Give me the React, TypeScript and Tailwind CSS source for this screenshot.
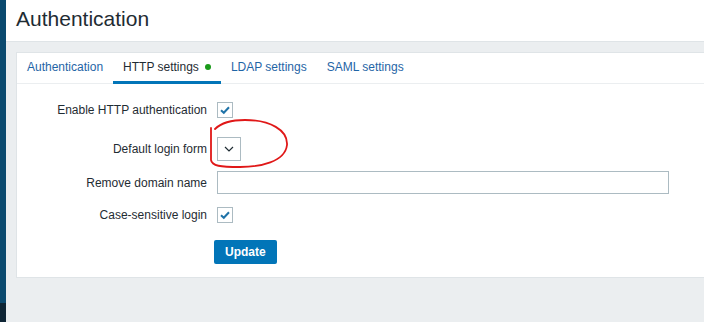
import React from 'react';

const Check: React.FC = () => (
  <div className="w-4 h-4 border border-[#acbbc2] bg-white flex items-center justify-center">
    <svg width="12" height="12" viewBox="0 0 12 12">
      <path d="M2 6.2 L4.8 8.8 L10 3.2" fill="none" stroke="#1f73a8" strokeWidth="2" />
    </svg>
  </div>
);

const Row: React.FC<{ label: string; children: React.ReactNode; className?: string }> = ({ label, children, className }) => (
  <div className={`flex items-center ${className ?? ''}`}>
    <div className="w-[200px] pr-[10px] text-right text-[12px] leading-[16px] text-[#1f2c33]">{label}</div>
    {children}
  </div>
);

export default function App() {
  return (
    <div className="relative w-[704px] h-[322px] flex bg-[#ebeef0] overflow-hidden" style={{ fontFamily: '"Liberation Sans", Arial, sans-serif' }}>
      {/* sidebar edge */}
      <div className="w-[6px] flex flex-col">
        <div className="flex-1 bg-[#0b4a6f]" />
        <div className="h-[19px] bg-[#0e2535]" />
      </div>

      <div className="flex-1 flex flex-col">
        <div className="h-[42px] bg-white border-b border-[#dfe4e7] pl-[10px] pt-[7px]">
          <h1 className="text-[21px] leading-[24px] text-[#1f2c33]">Authentication</h1>
        </div>

        <div className="pl-[10px] pt-[10px]">
          <div className="h-[226px] bg-white border border-[#dfe4e7] border-r-0">
            {/* tabs */}
            <div className="h-[31px] flex items-end pl-[10px] border-b border-[#ebeef0] text-[12px] leading-[18px]">
              <div className="pb-[7px] text-[#1f65a6] mr-[10px]">Authentication</div>
              <div className="px-[10px] pb-[5px] mb-[-1px] border-b-[3px] border-[#0275b8] text-[#1f2c33] flex items-center mr-[10px]">
                HTTP settings
                <span className="ml-[6px] w-[6px] h-[6px] rounded-full bg-[#1a9a1a]" />
              </div>
              <div className="pb-[7px] text-[#1f65a6] mr-[20px]">LDAP settings</div>
              <div className="pb-[7px] text-[#1f65a6]">SAML settings</div>
            </div>

            <div className="pt-[18px]">
              <Row label="Enable HTTP authentication">
                <Check />
              </Row>
              <Row label="Default login form" className="mt-[19px]">
                <div className="w-[24px] h-[24px] border border-[#acbbc2] flex items-center justify-center">
                  <svg width="10" height="6" viewBox="0 0 10 6">
                    <path d="M1 1 L5 5 L9 1" fill="none" stroke="#1f2c33" strokeWidth="1.2" />
                  </svg>
                </div>
              </Row>
              <Row label="Remove domain name" className="mt-[10px]">
                <div className="w-[452px] h-[23px] border border-[#acbbc2] bg-white" />
              </Row>
              <Row label="Case-sensitive login" className="mt-[13px]">
                <Check />
              </Row>
              <div className="pl-[197px] mt-[16px]">
                <button className="h-[24px] px-[11px] rounded-[2px] bg-[#0275b8] text-white text-[12px] font-bold">Update</button>
              </div>
            </div>
          </div>
        </div>
      </div>

      {/* red annotation */}
      <svg className="absolute left-[200px] top-[110px]" width="95" height="65" viewBox="0 0 95 65">
        <path
          d="M11 18 L11 50 C12 56 20 57 40 57 C60 57 85 52 87 35 C88 20 70 10 45 10 C30 10 20 14 15 19"
          fill="none"
          stroke="#e01818"
          strokeWidth="1.8"
          strokeLinecap="round"
        />
      </svg>
    </div>
  );
}
